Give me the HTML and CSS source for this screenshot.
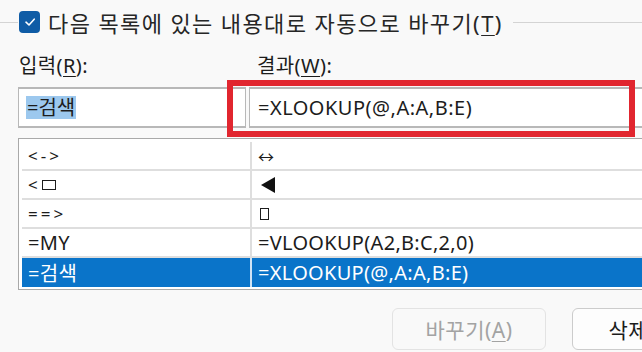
FILE: index.html
```html
<!DOCTYPE html>
<html lang="ko">
  <head>
    <meta charset="UTF-8" />
    <meta name="viewport" content="width=device-width, initial-scale=1.0" />
    <title>자동 고침</title>
    <link rel="stylesheet" href="styles.css">
  </head>

  <body>
    <div class="dialog">
      <!-- 그룹 제목 -->
      <div class="group-head">
        <span class="group-line short"></span>
        <span class="check-box">
          <svg width="14" height="14" viewBox="0 0 14 14">
            <path d="M3 7.2 L6 10 L11.2 4.2" fill="none" stroke="#ffffff" stroke-width="1.6" stroke-linecap="round" stroke-linejoin="round" />
          </svg>
        </span>
        <span class="group-title">다음 목록에 있는 내용대로 자동으로 바꾸기(<u>T</u>)</span>
        <span class="group-line"></span>
      </div>

      <div class="labels">
        <span class="label-in">입력(<u>R</u>):</span>
        <span class="label-out">결과(<u>W</u>):</span>
      </div>

      <div class="inputs">
        <div class="field field-in"><span class="sel">=검색</span></div>
        <div class="field field-out">=XLOOKUP(@,A:A,B:E)</div>
        <div class="mark"></div>
      </div>

      <div class="list">
        <div class="row">
          <div class="cell sym">&lt;-&gt;</div>
          <div class="cell arrow">↔</div>
        </div>
        <div class="row">
          <div class="cell sym">&lt;<span class="box wide"></span></div>
          <div class="cell"><span class="tri"></span></div>
        </div>
        <div class="row">
          <div class="cell sym">==&gt;</div>
          <div class="cell"><span class="box"></span></div>
        </div>
        <div class="row">
          <div class="cell">=MY</div>
          <div class="cell">=VLOOKUP(A2,B:C,2,0)</div>
        </div>
        <div class="row selected">
          <div class="cell">=검색</div>
          <div class="cell">=XLOOKUP(@,A:A,B:E)</div>
        </div>
      </div>

      <div class="buttons">
        <button class="btn" disabled>바꾸기(<u>A</u>)</button>
        <button class="btn btn-del">삭제(<u>D</u>)</button>
      </div>
    </div>
  </body>
</html>
```

FILE: styles.css
```css
html,
body {
  margin: 0;
  padding: 0;
  overflow: hidden;
}

body {
  width: 642px;
  height: 352px;
  background-color: #f9f9f9;
  color: #1c1c1c;
  font-family: "Noto Sans", "Noto Sans CJK KR", sans-serif;
}

.dialog {
  width: 780px;
}

u {
  text-decoration-thickness: 1px;
  text-underline-offset: 3px;
}

/* cabecalho do grupo */
.group-head {
  height: 44px;
  display: flex;
  align-items: center;
}

.group-line {
  flex: 1;
  height: 1px;
  background: #d4d4d4;
  margin-left: 10px;
  margin-right: 138px;
}

.group-line.short {
  flex: 0 0 18px;
  margin: 0;
}

.check-box {
  width: 21px;
  height: 22px;
  border-radius: 4px;
  background: #0f5ca6;
  display: flex;
  align-items: center;
  justify-content: center;
  margin: 0 8px 0 1px;
}

.group-title {
  font-size: 22px;
  letter-spacing: 1.4px;
  color: #262626;
}

.labels {
  height: 41px;
  padding-bottom: 2px;
  display: flex;
  align-items: center;
  font-size: 20px;
  letter-spacing: 0.4px;
}

.label-in {
  margin-left: 19px;
  width: 238px;
}

/* caixas de texto */
.inputs {
  position: relative;
  display: flex;
  gap: 3px;
  padding-left: 18px;
  height: 41px;
}

.field {
  background: #ffffff;
  border: 1px solid #b8b8b8;
  border-top-width: 2px;
  border-bottom-width: 2px;
  display: flex;
  align-items: center;
  padding-left: 8px;
  font-size: 20px;
  box-sizing: border-box;
}

.field-in {
  width: 228px;
  padding-left: 7px;
}

.field-out {
  flex: 1;
  letter-spacing: 0.5px;
}

.sel {
  background: #9cc8ee;
  padding: 0 1px;
  line-height: 23px;
}

.mark {
  position: absolute;
  left: 227px;
  top: -7px;
  width: 408px;
  height: 57px;
  border: 6px solid #e1262f;
  box-sizing: border-box;
}

/* lista */
.list {
  margin: 10px 0 0 18px;
  border: 1px solid #a9a9a9;
  padding: 3px 3px 2px 3px;
  background: #ffffff;
}

.row {
  display: flex;
  height: 27px;
  border-bottom: 2px solid #dedede;
}

.row:last-child {
  border-bottom: none;
  height: 29px;
}

.cell {
  display: flex;
  align-items: center;
  padding-left: 6px;
  font-size: 20px;
  letter-spacing: 0.3px;
  white-space: nowrap;
}

.cell:first-child {
  width: 222px;
  border-right: 2px solid #dedede;
}

.cell.sym {
  font-size: 17px;
  letter-spacing: 3px;
}

.cell.arrow {
  font-size: 16px;
}

.box {
  display: inline-block;
  width: 9px;
  height: 12px;
  border: 1.5px solid #1c1c1c;
  box-sizing: border-box;
  margin-left: 2px;
}

.box.wide {
  width: 14px;
  height: 10px;
  margin-left: 1px;
}

.tri {
  width: 0;
  height: 0;
  border-top: 8px solid transparent;
  border-bottom: 8px solid transparent;
  border-right: 14px solid #111111;
  margin-left: 3px;
}

.row.selected {
  background: #0a74c9;
  color: #ffffff;
}

.row.selected .cell:first-child {
  border-right-color: #cfe3f5;
}

/* botoes */
.buttons {
  display: flex;
  gap: 26px;
  margin: 18px 0 0 392px;
}

.btn {
  width: 154px;
  height: 42px;
  border-radius: 6px;
  border: 1px solid #cccccc;
  background: #fdfdfd;
  color: #1c1c1c;
  font-family: "Noto Sans", "Noto Sans CJK KR", sans-serif;
  font-size: 21px;
  letter-spacing: 0.5px;
}

.btn-del {
  padding-right: 18px;
}

.btn:disabled {
  border-color: #e3e3e3;
  background: #f9f9f9;
  color: #a3a3a3;
}
```
